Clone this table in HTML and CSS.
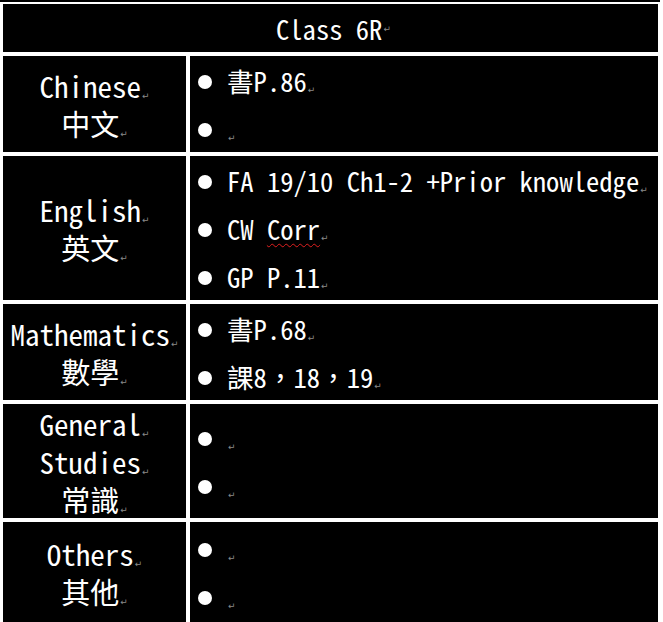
FILE: index.html
```html
<!DOCTYPE html>
<html>
<head>
<meta charset="utf-8">
<link rel="stylesheet" href="styles.css">
</head>
<body>
<div class="topline"></div>
<div class="sheet">
  <div class="cell header">Class 6R<span class="pm">↵</span></div>

  <div class="cell label"><div>Chinese<span class="pm">↵</span></div><div>中文<span class="pm">↵</span></div></div>
  <div class="cell items">
    <div class="item"><span class="dot"></span><span>書P.86<span class="pm">↵</span></span></div>
    <div class="item"><span class="dot"></span><span><span class="pm">↵</span></span></div>
  </div>

  <div class="cell label"><div>English<span class="pm">↵</span></div><div>英文<span class="pm">↵</span></div></div>
  <div class="cell items">
    <div class="item"><span class="dot"></span><span>FA 19/10 Ch1-2 +Prior knowledge<span class="pm">↵</span></span></div>
    <div class="item"><span class="dot"></span><span>CW <span class="spell">Corr</span><span class="pm">↵</span></span></div>
    <div class="item"><span class="dot"></span><span>GP P.11<span class="pm">↵</span></span></div>
  </div>

  <div class="cell label"><div>Mathematics<span class="pm">↵</span></div><div>數學<span class="pm">↵</span></div></div>
  <div class="cell items">
    <div class="item"><span class="dot"></span><span>書P.68<span class="pm">↵</span></span></div>
    <div class="item"><span class="dot"></span><span>課8，18，19<span class="pm">↵</span></span></div>
  </div>

  <div class="cell label"><div>General<span class="pm">↵</span></div><div>Studies<span class="pm">↵</span></div><div>常識<span class="pm">↵</span></div></div>
  <div class="cell items">
    <div class="item"><span class="dot"></span><span><span class="pm">↵</span></span></div>
    <div class="item"><span class="dot"></span><span><span class="pm">↵</span></span></div>
  </div>

  <div class="cell label"><div>Others<span class="pm">↵</span></div><div>其他<span class="pm">↵</span></div></div>
  <div class="cell items">
    <div class="item"><span class="dot"></span><span><span class="pm">↵</span></span></div>
    <div class="item"><span class="dot"></span><span><span class="pm">↵</span></span></div>
  </div>
</div>
</body>
</html>
```

FILE: styles.css
```css
html, body {
  margin: 0;
  padding: 0;
  background: #ffffff;
}

body {
  width: 663px;
  height: 622px;
  overflow: hidden;
  font-family: "Noto Sans CJK TC", "Noto Sans CJK SC", sans-serif;
  font-feature-settings: "hwid" 1;
  font-size: 26.6px;
  color: #ffffff;
}

.topline {
  width: 660px;
  height: 2px;
  background: #000000;
}

.sheet {
  display: grid;
  grid-template-columns: 183px 468px;
  grid-template-rows: 48px 96px 144px 96px 114px 100px;
  gap: 4px;
  padding: 2px 5px 0 3px;
}

.cell {
  background: #000000;
}

.header {
  grid-column: 1 / 3;
  display: flex;
  align-items: center;
  justify-content: center;
  line-height: 48px;
  padding-top: 2px;
  padding-left: 6px;
}

.label {
  display: flex;
  flex-direction: column;
  justify-content: center;
  align-items: center;
  font-size: 29px;
  line-height: 38px;
}

.items {
  display: flex;
  flex-direction: column;
  justify-content: center;
  padding-left: 8px;
  padding-top: 2px;
}

.item {
  display: flex;
  align-items: center;
  height: 48px;
  gap: 15px;
  line-height: 48px;
}

.dot {
  width: 14px;
  height: 14px;
  margin-top: 2px;
  border-radius: 50%;
  background: #ffffff;
  flex: none;
}

.pm {
  font-family: "DejaVu Sans", sans-serif;
  font-feature-settings: normal;
  font-size: 9px;
  line-height: 0;
  color: #8a8a8a;
  vertical-align: -1px;
  margin-left: 1px;
}

.spell {
  text-decoration: underline wavy #e02020;
  text-decoration-thickness: 1px;
  text-underline-offset: 3px;
}
```
